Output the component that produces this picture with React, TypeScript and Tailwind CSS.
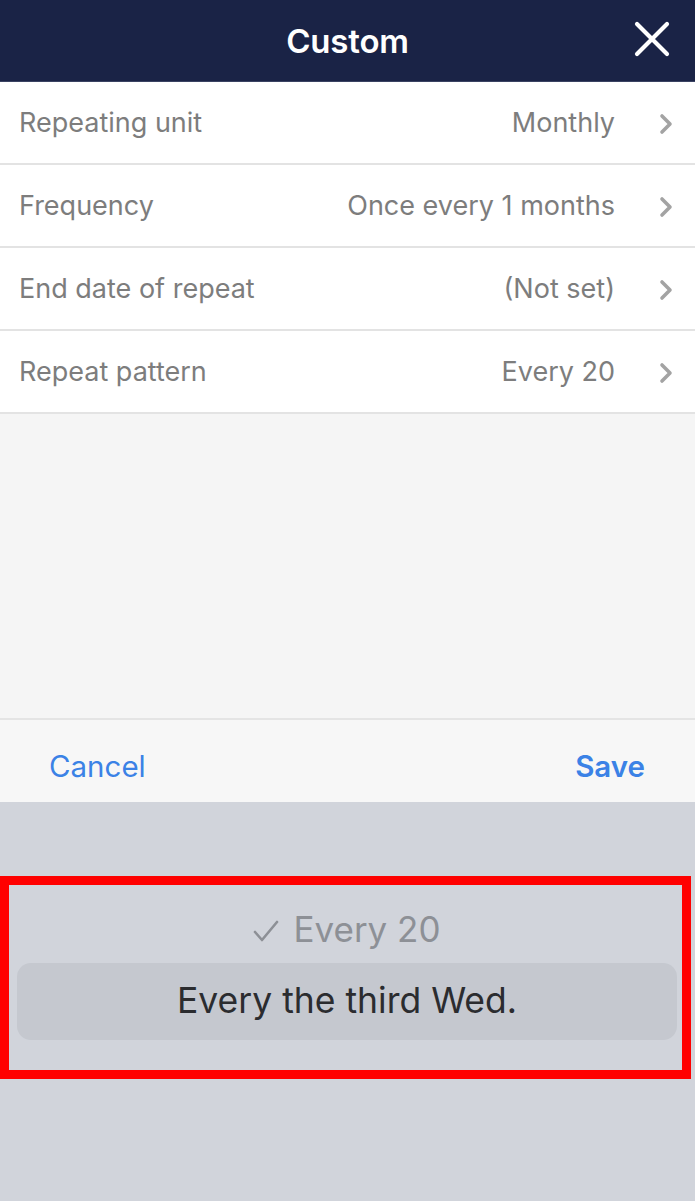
import React from 'react';

const rows = [
  { label: 'Repeating unit', value: 'Monthly' },
  { label: 'Frequency', value: 'Once every 1 months' },
  { label: 'End date of repeat', value: '(Not set)' },
  { label: 'Repeat pattern', value: 'Every 20' },
];

const Chevron = () => (
  <svg width="14" height="22" viewBox="0 0 14 22" fill="none">
    <path d="M3 3l8 8-8 8" stroke="#a3a3a3" strokeWidth="3.6" strokeLinecap="round" strokeLinejoin="round" />
  </svg>
);

const App = () => {
  return (
    <div className="flex h-[1201px] w-[695px] flex-col bg-[#f5f5f5] font-['Inter','Roboto',sans-serif]">
      <header className="relative flex h-[82px] shrink-0 items-center justify-center border-b border-[#3a4262] bg-[#1a2346] pt-[2px]">
        <h1 className="text-[33px] font-semibold tracking-[-0.2px] text-white">Custom</h1>
        <button className="absolute right-[24px] top-[20px]">
          <svg width="38" height="38" viewBox="0 0 38 38" fill="none">
            <path d="M4 4l30 30M34 4L4 34" stroke="#fff" strokeWidth="4.2" strokeLinecap="round" />
          </svg>
        </button>
      </header>

      <div className="bg-white">
        {rows.map((row) => (
          <div
            key={row.label}
            className="flex h-[83px] items-center border-b-2 border-[#e3e3e3] pl-[19px] pr-[22px] pt-[2px] text-[27px] text-[#7d7d7d]"
          >
            <span className="flex-1">{row.label}</span>
            <span className="mr-[44px]">{row.value}</span>
            <Chevron />
          </div>
        ))}
      </div>

      <div className="flex-1" />

      <div className="flex h-[84px] shrink-0 items-center justify-between border-t-2 border-[#e4e4e4] bg-[#f7f7f7] pl-[49px] pr-[50px] pt-[10px] text-[29.5px] text-[#3b82e6]">
        <button>Cancel</button>
        <button className="font-semibold">Save</button>
      </div>

      <div className="h-[399px] shrink-0 bg-[#d1d4db] pt-[74px]">
        <div className="h-[203px] w-[691px] border-[9px] border-[#ff0000] pl-[8px] pr-[5px] pt-[18px]">
          <div className="flex items-center justify-center gap-[14px] text-[35px] text-[#8d9096]">
            <svg width="26" height="22" viewBox="0 0 26 22" fill="none" className="mt-[4px]">
              <path d="M2 12l7 8L24 2" stroke="#8d9096" strokeWidth="2.6" strokeLinecap="round" strokeLinejoin="round" />
            </svg>
            <span>Every 20</span>
          </div>
          <div className="mt-[7px] flex h-[77px] items-center justify-center rounded-[14px] bg-[#c5c8cf] text-[35.5px] text-[#2b2c2f]">
            Every the third Wed.
          </div>
        </div>
      </div>
    </div>
  );
};

export default App;
